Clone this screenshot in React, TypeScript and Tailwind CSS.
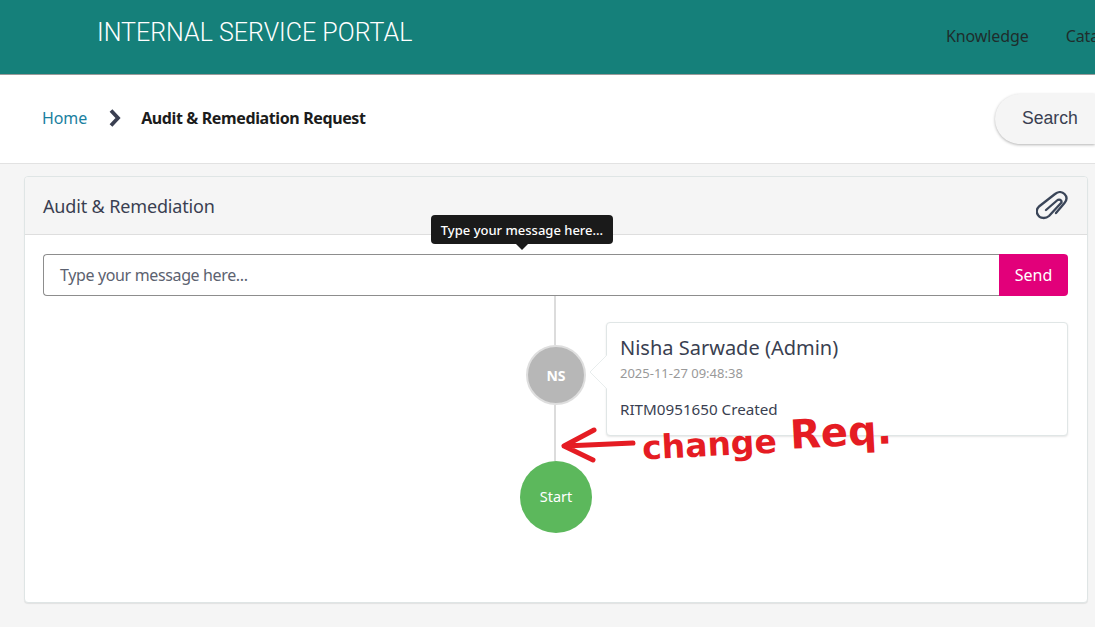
export default function App() {
  return (
    <div className="relative h-[627px] w-[1095px] overflow-hidden bg-[#f5f5f5] font-['Noto_Sans',sans-serif] text-[#3a3f51]">
      <header className="flex h-[75px] items-start justify-between overflow-hidden border-b border-[#9a9a9a] bg-[#15807a]">
        <div className="ml-[97px] mt-[15px] font-['Roboto',sans-serif] text-[25px] font-light leading-[36px] text-white">INTERNAL SERVICE PORTAL</div>
        <nav className="mt-[24px] flex w-[149px] shrink-0 gap-[37px] overflow-hidden whitespace-nowrap text-[16px] leading-[24px] tracking-[-0.1px] text-[#1f2d2c]">
          <span>Knowledge</span>
          <span>Catalog</span>
        </nav>
      </header>
      <div className="flex h-[89px] items-center justify-between overflow-hidden border-b border-[#e2e2e2] bg-white">
        <div className="mb-[2px] ml-[42px] flex items-center text-[16px]">
          <span className="tracking-[-0.1px] text-[#1a7fa0]">Home</span>
          <svg className="ml-[21px] mr-[19px]" width="14" height="20" viewBox="0 0 14 20" fill="none">
            <path d="M3 2.5 10 10 3 17.5" stroke="#3a3f51" strokeWidth="3.8" />
          </svg>
          <span className="font-bold tracking-[-0.38px] text-[#1c1c1c]">Audit &amp; Remediation Request</span>
        </div>
        <div className="flex h-[50px] w-[100px] shrink-0 items-center rounded-l-[25px] bg-[#f5f5f5] pb-[2px] pl-[27px] font-['Liberation_Sans',sans-serif] text-[17.6px] shadow-[0_1px_3px_rgba(0,0,0,0.3)]">Search</div>
      </div>
      <main className="ml-[24px] mt-[12px] h-[427px] w-[1064px] overflow-hidden rounded border border-[#dfe5e5] bg-white shadow-[0_1px_1px_rgba(0,0,0,0.08)]">
        <div className="flex h-[58px] items-center justify-between border-b border-[#dedede] bg-[#f5f5f5] pl-[18px] pr-[18px]">
          <span className="pt-[1px] text-[18px] tracking-[-0.15px]">Audit &amp; Remediation</span>
          <svg width="33" height="29" viewBox="0 0 33 29" fill="none" stroke="#3a4558" strokeWidth="2.3" strokeLinecap="round" strokeLinejoin="round">
            <path d="M10 19 21 9.5c2-1.8 5-.6 4.5 2L13 25c-3.500 3-9 2.500-11-1-2-3-1.500-6 1-8.500L19 3c3-2.500 7-2.500 9.500 0s2.500 6 0 9L20 22" />
          </svg>
        </div>
        <div className="pl-[18px] pr-[19px] pt-[19px]">
          <div className="flex h-[42px]">
            <div className="flex h-[42px] flex-1 items-center rounded-l border border-r-0 border-[#8d8d8d] pl-[16px] text-[16px] tracking-[-0.36px] text-[#5c6270]">Type your message here...</div>
            <div className="flex h-[42px] w-[69px] items-center justify-center rounded-r bg-[#e2007a] text-[16px] text-white">Send</div>
          </div>
          <div className="flex">
            <div className="w-[477px] shrink-0" />
            <div className="flex w-[72px] shrink-0 flex-col items-center">
              <div className="mr-[2px] h-[49px] w-[2px] bg-[#dcdcdc]" />
              <div className="flex h-[60px] w-[60px] items-center justify-center rounded-full border-2 border-[#dedede] bg-[#b7b7b7] text-[14px] font-bold text-white">NS</div>
              <div className="mr-[2px] h-[56px] w-[2px] bg-[#dcdcdc]" />
              <div className="flex h-[72px] w-[72px] items-center justify-center rounded-full bg-[#5cb85c] pb-[1px] text-[14.500px] text-white">Start</div>
            </div>
            <div className="relative ml-[14px] mt-[26px] h-[114px] flex-1 rounded border border-[#e0e6e6] bg-white px-[13px] pt-[10px] shadow-[0_1px_2px_rgba(0,0,0,0.1)]">
              <svg className="absolute left-[-19px] top-[31px]" width="20" height="36" viewBox="0 0 20 36" fill="#fff" stroke="#e8eded">
                <path d="M19 1 2 18l17 17" />
              </svg>
              <div className="text-[20px] leading-[30px]">Nisha Sarwade (Admin)</div>
              <div className="text-[13px] leading-[20px] text-[#999]">2025-11-27 09:48:38</div>
              <div className="mt-[15px] text-[15.200px] leading-[22px]">RITM0951650 Created</div>
            </div>
          </div>
        </div>
      </main>
      <div className="absolute left-[431px] top-[215px] flex h-[29px] w-[182px] items-center justify-center rounded bg-[#1a1a1a] pt-[2px] text-[13px] font-medium text-white">
        Type your message here...
        <div className="absolute bottom-[-6px] left-[85px] h-0 w-0 border-x-[6px] border-t-[6px] border-x-transparent border-t-[#1a1a1a]" />
      </div>
      <svg className="absolute left-[558px] top-[425px]" width="80" height="40" viewBox="0 0 80 40" fill="none" stroke="#e51c23" strokeWidth="5" strokeLinecap="round" strokeLinejoin="round">
        <path d="M75 18 7 21M36 5 6 21l29 14" />
      </svg>
      <div className="absolute left-[642px] top-[424px] flex items-start gap-[13px] whitespace-nowrap font-['DejaVu_Sans',sans-serif] font-bold text-[#e51c23]">
        <span className="-rotate-[3deg] text-[33px] leading-[42px]">change</span>
        <span className="-mt-[17px] -rotate-[3deg] text-[40px] leading-[50px]">Req.</span>
      </div>
    </div>
  );
}
